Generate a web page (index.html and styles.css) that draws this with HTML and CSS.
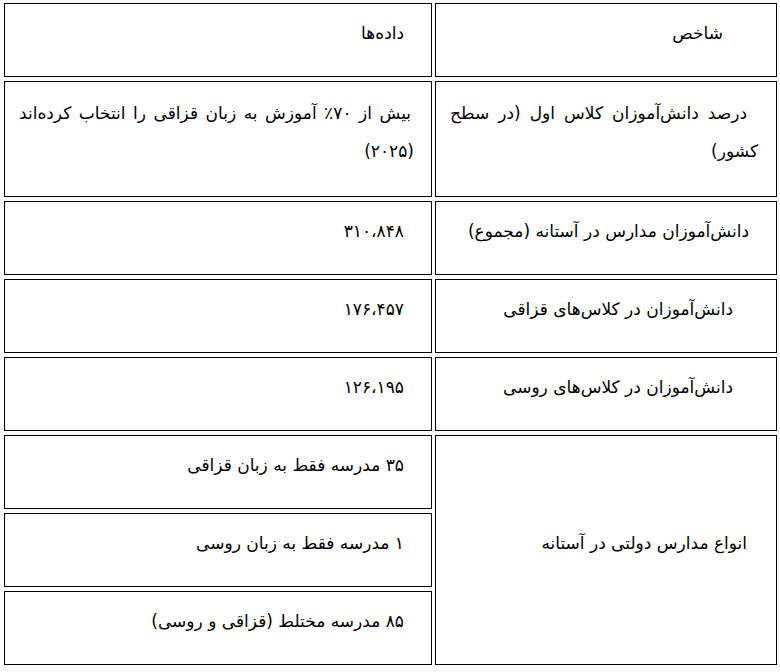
FILE: index.html
```html
<!DOCTYPE html>
<html lang="fa" dir="rtl">
<head>
<meta charset="utf-8">
<title>جدول</title>
<link rel="stylesheet" href="styles.css">
</head>
<body>
<table class="data">
  <tr class="row">
    <td class="key pad-head">شاخص</td>
    <td class="val">داده‌ها</td>
  </tr>
  <tr class="row tall">
    <td class="key just just-key">درصد دانش‌آموزان کلاس اول (در سطح<br>کشور)</td>
    <td class="val just just-val">بیش از ۷۰٪ آموزش به زبان قزاقی را انتخاب کرده‌اند<br>(۲۰۲۵)</td>
  </tr>
  <tr class="row">
    <td class="key">دانش‌آموزان مدارس در آستانه (مجموع)</td>
    <td class="val">۳۱۰،۸۴۸</td>
  </tr>
  <tr class="row">
    <td class="key pad-mid">دانش‌آموزان در کلاس‌های قزاقی</td>
    <td class="val">۱۷۶،۴۵۷</td>
  </tr>
  <tr class="row">
    <td class="key pad-mid">دانش‌آموزان در کلاس‌های روسی</td>
    <td class="val">۱۲۶،۱۹۵</td>
  </tr>
  <tr class="row">
    <td class="key pad-group" rowspan="3">انواع مدارس دولتی در آستانه</td>
    <td class="val">۳۵ مدرسه فقط به زبان قزاقی</td>
  </tr>
  <tr class="row">
    <td class="val">۱ مدرسه فقط به زبان روسی</td>
  </tr>
  <tr class="row">
    <td class="val">۸۵ مدرسه مختلط (قزاقی و روسی)</td>
  </tr>
</table>
</body>
</html>
```

FILE: styles.css
```css
html, body {
  margin: 0;
  padding: 0;
  background: #ffffff;
}

body {
  font-family: "DejaVu Sans", sans-serif;
  font-size: 17px;
  color: #000000;
}

.data {
  border-collapse: separate;
  border-spacing: 3px 4px;
  margin-top: -1px;
  direction: rtl;
}

.data td {
  box-sizing: border-box;
  border: 1px solid #000000;
  height: 74px;
  padding: 0 27px 14px 8px;
  line-height: 38px;
  vertical-align: middle;
  text-align: right;
}

.data .tall td {
  height: 116px;
}

.key {
  width: 342px;
}

.val {
  width: 428px;
}

.data td.pad-head {
  padding-right: 53px;
}

.data td.pad-mid {
  padding-right: 43px;
}

.data td.pad-group {
  padding-right: 29px;
}

.data td.just {
  text-align: justify;
  text-align-last: justify;
}

.data td.just-key {
  padding-right: 18px;
  padding-left: 14px;
  text-indent: 11px;
}

.data td.just-val {
  padding-right: 17px;
  padding-left: 14px;
  text-indent: 3px;
}
```
